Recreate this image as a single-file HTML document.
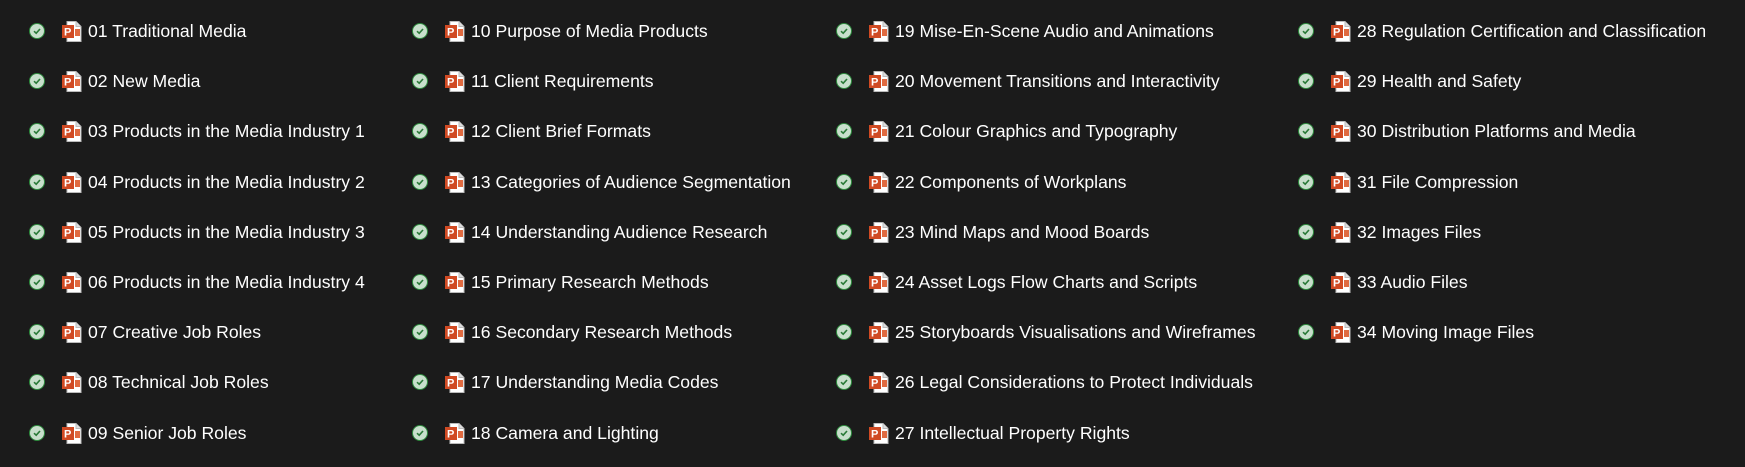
<!DOCTYPE html>
<html><head><meta charset="utf-8"><style>
html,body{margin:0;padding:0;background:#1b1b1b;width:1745px;height:467px;overflow:hidden}
.it{position:absolute;height:24px;font:17.6px "Liberation Sans",sans-serif;color:#fff;white-space:nowrap;line-height:24px}
.ck{position:absolute;left:0;top:5px;width:14px;height:14px;border-radius:50%;background:#c8dfcc;border:1.5px solid #2e8b3e}
.ck svg{position:absolute;left:2px;top:2px}
.pp{position:absolute;left:33px;top:3px;width:20px;height:21px}
.tx{position:absolute;left:59px;top:1px}
</style></head><body>
<div id="c"></div>
<script>
var cols=[[29,["01 Traditional Media","02 New Media","03 Products in the Media Industry 1","04 Products in the Media Industry 2","05 Products in the Media Industry 3","06 Products in the Media Industry 4","07 Creative Job Roles","08 Technical Job Roles","09 Senior Job Roles"]],
[412,["10 Purpose of Media Products","11 Client Requirements","12 Client Brief Formats","13 Categories of Audience Segmentation","14 Understanding Audience Research","15 Primary Research Methods","16 Secondary Research Methods","17 Understanding Media Codes","18 Camera and Lighting"]],
[836,["19 Mise-En-Scene Audio and Animations","20 Movement Transitions and Interactivity","21 Colour Graphics and Typography","22 Components of Workplans","23 Mind Maps and Mood Boards","24 Asset Logs Flow Charts and Scripts","25 Storyboards Visualisations and Wireframes","26 Legal Considerations to Protect Individuals","27 Intellectual Property Rights"]],
[1298,["28 Regulation Certification and Classification","29 Health and Safety","30 Distribution Platforms and Media","31 File Compression","32 Images Files","33 Audio Files","34 Moving Image Files"]]];
var h="";
cols.forEach(function(c){c[1].forEach(function(t,i){
h+='<div class="it" style="left:'+c[0]+'px;top:'+(18+i*50.2)+'px"><div class="ck"><svg width="10" height="10" viewBox="0 0 10 10"><path d="M2 5.2L4.2 7.2L8 3" stroke="#2a7a38" stroke-width="1.6" fill="none"/></svg></div>'+
'<svg class="pp" viewBox="0 0 20 21"><path d="M5 0.5H14L19 5.5V20.5H5Z" fill="#fff" stroke="#bbb"/><path d="M14 0.5V5.5H19" fill="#ddd" stroke="#bbb"/><rect x="0" y="4" width="12" height="13" fill="#d04a23"/><text x="2" y="14.5" font-family="Liberation Sans" font-weight="bold" font-size="11" fill="#fff">P</text><rect x="13" y="8" width="5" height="7" fill="#e06a40"/></svg>'+
'<span class="tx">'+t+'</span></div>';});});
document.getElementById("c").innerHTML=h;
</script>
</body></html>
